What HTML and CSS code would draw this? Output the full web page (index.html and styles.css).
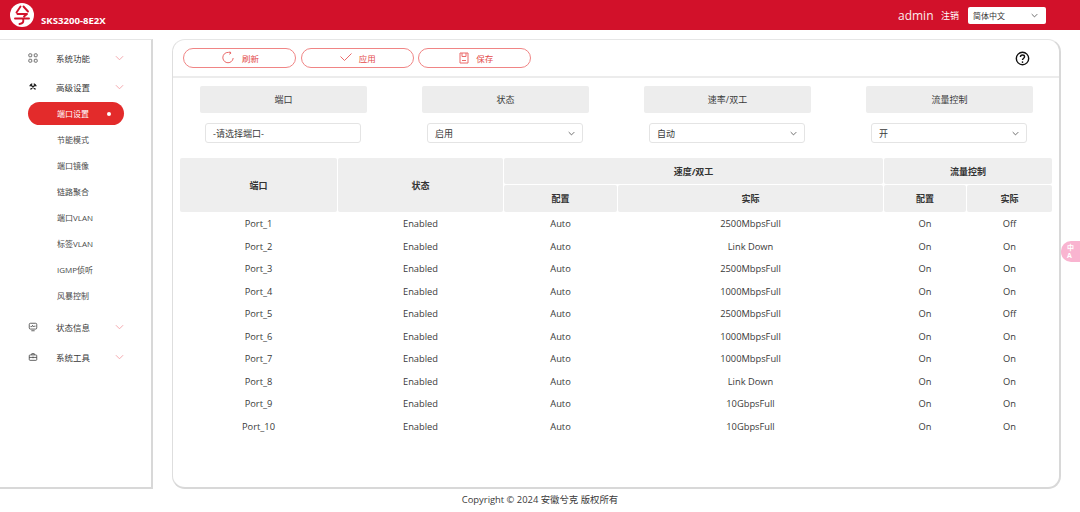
FILE: index.html
```html
<!DOCTYPE html>
<html lang="zh">
<head>
<meta charset="utf-8">
<title>SKS3200-8E2X</title>
<link rel="stylesheet" href="styles.css">
</head>
<body>
<header class="topbar">
  <div class="brand">
    <svg class="logo" viewBox="0 0 24 24"><circle cx="12" cy="12" r="12" fill="#fff"/><path d="M10.500 3.500 6.500 9.500M13.500 3.500 18 8.500M7.500 11H17L14 13.500M5 15.500H19M13 15.500C14 19 13 20.500 9.500 21" fill="none" stroke="#d2112a" stroke-width="1.900" stroke-linecap="round" stroke-linejoin="round"/></svg>
    <span class="model">SKS3200-8E2X</span>
  </div>
  <div class="userbox">
    <span class="user">admin</span>
    <span class="logout">注销</span>
    <div class="lang"><span>简体中文</span><svg class="caret" viewBox="0 0 10 6"><path d="M1 1l4 4 4-4"/></svg></div>
  </div>
</header>

<div class="layout">
  <nav class="sidebar">
    <div class="nav-head">
      <svg class="nav-icon" viewBox="0 0 12 12"><g fill="none" stroke="#555" stroke-width="1"><rect x="1" y="1" width="3.500" height="3.500" rx=".8"/><rect x="7.500" y="1" width="3.500" height="3.500" rx=".8"/><rect x="1" y="7.500" width="3.500" height="3.500" rx=".8"/><rect x="7.500" y="7.500" width="3.500" height="3.500" rx=".8"/></g></svg>
      <span class="nav-label">系统功能</span>
      <svg class="nav-caret" viewBox="0 0 10 6"><path d="M1 1l4 4 4-4"/></svg>
    </div>
    <div class="nav-head">
      <svg class="nav-icon" viewBox="0 0 12 12"><g fill="none" stroke="#222" stroke-width="1.600" stroke-linecap="round"><path d="M3.500 3.500l5 5M8.500 3.500l-5 5"/><path d="M2.500 4.500l2-2M7.500 2.500l2 2"/></g></svg>
      <span class="nav-label">高级设置</span>
      <svg class="nav-caret" viewBox="0 0 10 6"><path d="M1 1l4 4 4-4"/></svg>
    </div>
    <ul class="subnav">
      <li class="sub-item active"><span>端口设置</span><i class="dot"></i></li>
      <li class="sub-item"><span>节能模式</span></li>
      <li class="sub-item"><span>端口镜像</span></li>
      <li class="sub-item"><span>链路聚合</span></li>
      <li class="sub-item"><span>端口VLAN</span></li>
      <li class="sub-item"><span>标签VLAN</span></li>
      <li class="sub-item"><span>IGMP侦听</span></li>
      <li class="sub-item"><span>风暴控制</span></li>
    </ul>
    <div class="nav-head after-sub">
      <svg class="nav-icon" viewBox="0 0 12 12"><g fill="none" stroke="#444" stroke-width="1"><rect x="1.500" y="1.500" width="9" height="7" rx="1.500"/><path d="M3 5.500h1.500l1-1.500 1 2 1-1H9M4 10.500h4"/></g></svg>
      <span class="nav-label">状态信息</span>
      <svg class="nav-caret" viewBox="0 0 10 6"><path d="M1 1l4 4 4-4"/></svg>
    </div>
    <div class="nav-head">
      <svg class="nav-icon" viewBox="0 0 12 12"><g fill="none" stroke="#444" stroke-width="1"><rect x="1.500" y="3.500" width="9" height="6.500" rx="1"/><path d="M4.500 3.500V2h3v1.500M1.500 6.500h9M6 5.500v2"/></g></svg>
      <span class="nav-label">系统工具</span>
      <svg class="nav-caret" viewBox="0 0 10 6"><path d="M1 1l4 4 4-4"/></svg>
    </div>
  </nav>

  <main class="card">
    <div class="toolbar">
      <button class="tool-btn" type="button">
        <svg class="tool-icon" viewBox="0 0 14 14"><path d="M9.500 2A5.200 5.200 0 1 0 12.200 7M8.800 .5l1.200 1.600-1.700 1.200"/></svg>
        <span>刷新</span>
      </button>
      <button class="tool-btn wide" type="button">
        <svg class="tool-icon" viewBox="0 0 14 14"><path d="M1.500 5.500l4 4 7-7"/></svg>
        <span>应用</span>
      </button>
      <button class="tool-btn wide" type="button">
        <svg class="tool-icon" viewBox="0 0 14 14"><path d="M3 2h8v10H3zM5 2v3.500h4V2M5 9.500h4"/></svg>
        <span>保存</span>
      </button>
      <svg class="help" viewBox="0 0 16 16"><circle cx="8" cy="8" r="6.600"/><path d="M5.800 6.300C5.800 3.600 10.200 3.700 10.200 6.200 10.200 7.800 8 7.800 8 9.700"/><circle class="help-dot" cx="8" cy="11.800" r=".9"/></svg>
    </div>

    <form class="filters">
      <div class="filter">
        <div class="filter-label">端口</div>
        <div class="control"><span>-请选择端口-</span></div>
      </div>
      <div class="filter">
        <div class="filter-label">状态</div>
        <div class="control"><span>启用</span><svg class="caret" viewBox="0 0 10 6"><path d="M1 1l4 4 4-4"/></svg></div>
      </div>
      <div class="filter">
        <div class="filter-label">速率/双工</div>
        <div class="control"><span>自动</span><svg class="caret" viewBox="0 0 10 6"><path d="M1 1l4 4 4-4"/></svg></div>
      </div>
      <div class="filter">
        <div class="filter-label">流量控制</div>
        <div class="control"><span>开</span><svg class="caret" viewBox="0 0 10 6"><path d="M1 1l4 4 4-4"/></svg></div>
      </div>
    </form>

    <table class="ports">
      <colgroup>
        <col class="c1"><col class="c2"><col class="c3"><col class="c4"><col class="c5"><col class="c6">
      </colgroup>
      <thead>
        <tr class="hr1">
          <th rowspan="2">端口</th>
          <th rowspan="2">状态</th>
          <th colspan="2">速度/双工</th>
          <th colspan="2">流量控制</th>
        </tr>
        <tr class="hr2">
          <th>配置</th><th>实际</th><th>配置</th><th>实际</th>
        </tr>
      </thead>
      <tbody>
        <tr><td>Port_1</td><td>Enabled</td><td>Auto</td><td>2500MbpsFull</td><td>On</td><td>Off</td></tr>
        <tr><td>Port_2</td><td>Enabled</td><td>Auto</td><td>Link Down</td><td>On</td><td>On</td></tr>
        <tr><td>Port_3</td><td>Enabled</td><td>Auto</td><td>2500MbpsFull</td><td>On</td><td>On</td></tr>
        <tr><td>Port_4</td><td>Enabled</td><td>Auto</td><td>1000MbpsFull</td><td>On</td><td>On</td></tr>
        <tr><td>Port_5</td><td>Enabled</td><td>Auto</td><td>2500MbpsFull</td><td>On</td><td>Off</td></tr>
        <tr><td>Port_6</td><td>Enabled</td><td>Auto</td><td>1000MbpsFull</td><td>On</td><td>On</td></tr>
        <tr><td>Port_7</td><td>Enabled</td><td>Auto</td><td>1000MbpsFull</td><td>On</td><td>On</td></tr>
        <tr><td>Port_8</td><td>Enabled</td><td>Auto</td><td>Link Down</td><td>On</td><td>On</td></tr>
        <tr><td>Port_9</td><td>Enabled</td><td>Auto</td><td>10GbpsFull</td><td>On</td><td>On</td></tr>
        <tr><td>Port_10</td><td>Enabled</td><td>Auto</td><td>10GbpsFull</td><td>On</td><td>On</td></tr>
      </tbody>
    </table>
  </main>
</div>

<footer class="footer">Copyright © 2024 安徽兮克 版权所有</footer>

<div class="translate"><span>中</span><span class="translate-a">A</span></div>
</body>
</html>
```

FILE: styles.css
```css
* { box-sizing: border-box; }
html, body { margin: 0; height: 100%; }
body {
  position: relative;
  width: 1080px;
  height: 512px;
  overflow: hidden;
  background: #fff;
  color: #3a3a3a;
  font-family: "Open Sans", "Noto Sans CJK SC", sans-serif;
  font-size: 9.400px;
}

.topbar {
  height: 30px;
  background: #d2112a;
  display: flex;
  justify-content: space-between;
  align-items: center;
  padding: 0 34px 0 10px;
  color: #fff;
}
.brand { display: flex; align-items: center; gap: 7px; }
.logo { width: 24px; height: 24px; display: block; }
.model { font-weight: 700; font-size: 9.600px; margin-top: 11px; line-height: 12px; }
.userbox { display: flex; align-items: center; }
.user { font-size: 12px; width: 43px; opacity: .92; }
.logout { font-size: 9px; width: 27px; }
.lang {
  width: 78px; height: 17px;
  background: #fff;
  border-radius: 2px;
  color: #333;
  font-size: 8px;
  display: flex; align-items: center; justify-content: space-between;
  padding: 0 8px 0 5px;
}
.caret { width: 7px; height: 5px; fill: none; stroke: #555; stroke-width: 1.200; }

.layout {
  display: flex;
  gap: 19px;
  margin-top: 9px;
  height: 450px;
}

.sidebar {
  width: 153px;
  border-top: 1px solid #e6e6e6;
  border-right: 2px solid #d8d8d8;
  border-bottom: 2px solid #d8d8d8;
  padding-top: 3px;
}
.nav-head {
  height: 29.500px;
  display: flex;
  align-items: center;
  padding-left: 28px;
}
.nav-icon { width: 10px; height: 10px; flex: none; }
.nav-label { margin-left: 18px; width: 59px; font-size: 8.500px; color: #3a3a3a; }
.nav-caret { width: 9px; height: 6px; fill: none; stroke: #f3a0a6; stroke-width: 1; }
.subnav { list-style: none; margin: 0; padding: 0; }
.sub-item {
  height: 26px;
  display: flex;
  align-items: center;
  padding-left: 57px;
  font-size: 8px;
  color: #4a4a4a;
}
.sub-item.active {
  width: 96px;
  margin-left: 28px;
  height: 23px;
  margin-bottom: 1.500px;
  padding: 0 13px 0 29px;
  background: #e32b2b;
  border-radius: 12px;
  color: #fff;
  justify-content: space-between;
}
.dot { width: 4px; height: 4px; border-radius: 50%; background: #fff; }
.after-sub { margin-top: 4px; }

.card {
  width: 889px;
  border: 1px solid #e3e3e3;
  border-right-width: 2px;
  border-bottom-width: 2px;
  border-color: #e6e6e6 #d8d8d8 #d8d8d8 #dedede;
  border-radius: 13px;
  display: flex;
  flex-direction: column;
}
.toolbar {
  height: 38px;
  border-bottom: 2px solid #ececec;
  display: flex;
  align-items: center;
  gap: 4.500px;
  padding: 0 29px 0 10px;
  flex: none;
}
.tool-btn {
  width: 113px; height: 19.500px;
  border: 1px solid #f08585;
  border-radius: 10px;
  background: #fff;
  color: #e34b4b;
  font: inherit;
  font-size: 8.500px;
  display: flex; align-items: center; justify-content: center;
  gap: 7px;
  padding: 0 0 0 1px;
}
.tool-btn.wide { gap: 5.500px; }
.tool-icon { width: 14px; height: 14px; fill: none; stroke: #ea6b6b; stroke-width: 1; }
.help { width: 15px; height: 15px; margin-left: auto; fill: none; stroke: #111; stroke-width: 1.500; }
.help-dot { fill: #111; stroke: none; }

.filters {
  display: flex;
  gap: 55px;
  margin: 8px 0 0 27px;
}
.filter { width: 167px; }
.filter-label {
  height: 27px;
  background: #ededed;
  border-radius: 2px;
  display: flex; align-items: center; justify-content: center;
  font-size: 9px;
  color: #3a3a3a;
}
.control {
  width: 156px; height: 20px;
  margin: 10px 0 0 5px;
  border: 1px solid #e4e4e4;
  border-radius: 3px;
  display: flex; align-items: center; justify-content: space-between;
  padding: 0 7px;
  font-size: 9px;
  color: #3a3a3a;
}

.ports {
  margin: 14px 0 0 6px;
  width: 874px;
  table-layout: fixed;
  border-collapse: separate;
  border-spacing: 1px;
  text-align: center;
}
.c1 { width: 157px; }
.c2 { width: 165px; }
.c3 { width: 113px; }
.c4 { width: 265px; }
.c5 { width: 82px; }
.c6 { width: 85px; }
.ports th {
  background: #eee;
  border-radius: 2px;
  font-weight: 700;
  font-size: 9px;
  color: #333;
  padding: 0;
}
.hr1 { height: 26px; }
.hr2 { height: 27px; }
.ports td {
  height: 21.500px;
  padding: 0;
  font-size: 9.300px;
  color: #3a3a3a;
}

.footer {
  margin-top: 4px;
  text-align: center;
  font-size: 9.400px;
  color: #3a3a3a;
  line-height: 14px;
}

.translate {
  position: absolute;
  left: 1061px;
  top: 241px;
  width: 19px;
  height: 21px;
  border-radius: 10px 0 0 10px;
  background: #f9b4d0;
  color: #fff;
  font-size: 7px;
  font-weight: 700;
  line-height: 8px;
  padding: 3px 0 0 6px;
  display: flex;
  flex-direction: column;
}
.translate-a { line-height: 7px; }
```
